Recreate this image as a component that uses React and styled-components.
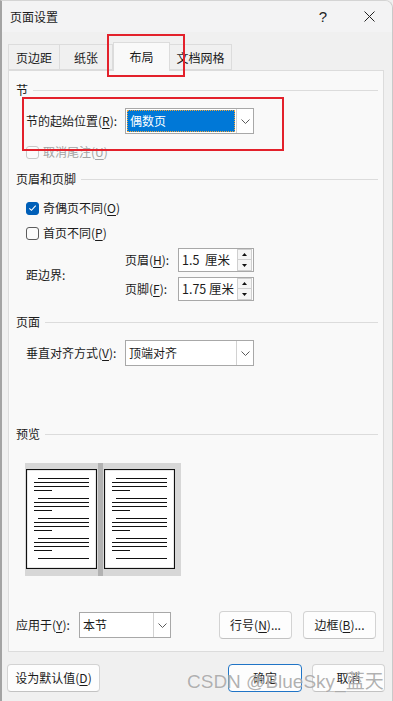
import React from "react";
import styled, { createGlobalStyle } from "styled-components";

const GlobalStyle = createGlobalStyle`
  html, body {
    margin: 0;
    padding: 0;
  }
  body {
    font-family: "Noto Sans CJK SC", "Noto Sans", sans-serif;
    font-size: 12px;
    color: #1b1b1b;
    background: #f0f0f0;
  }
  u {
    text-underline-offset: 2px;
    text-decoration-thickness: 1px;
  }
`;

const Window = styled.div`
  position: relative;
  width: 393px;
  height: 701px;
  box-sizing: border-box;
  background: #f0f0f0;
  border-left: 2px solid #a3a3a3;
  border-right: 1px solid #c9c9c9;
  border-top: 1px solid #d4d4d4;
  border-top-right-radius: 8px;
  overflow: hidden;
  display: flex;
  flex-direction: column;
`;

const TitleBar = styled.div`
  height: 31px;
  display: flex;
  align-items: center;
  justify-content: space-between;
  padding-left: 8px;
  background: #f3f3f4;
  line-height: 16px;
`;

const TitleButtons = styled.div`
  display: flex;
  height: 100%;
`;

const TitleButton = styled.div`
  width: 46px;
  display: flex;
  align-items: center;
  justify-content: center;
  font-family: "Liberation Sans", sans-serif;
  font-size: 15px;
  color: #222;
`;

const TabBar = styled.div`
  display: flex;
  align-items: flex-end;
  margin-top: 10px;
  padding-left: 6px;
  height: 28px;
  position: relative;
  z-index: 1;
`;

const Tab = styled.div`
  box-sizing: border-box;
  width: ${({ $w }) => $w}px;
  height: ${({ $active }) => ($active ? 29 : 26)}px;
  margin-bottom: ${({ $active }) => ($active ? -1 : 0)}px;
  display: flex;
  align-items: center;
  justify-content: center;
  padding-top: ${({ $active }) => ($active ? 0 : 1)}px;
  background: ${({ $active }) => ($active ? "#f9f9f9" : "#f0f0f0")};
  border: 1px solid #dcdcdc;
  border-bottom: ${({ $active }) => ($active ? "none" : "1px solid #dcdcdc")};
  border-left: ${({ $first, $active }) => ($first || $active ? "1px solid #dcdcdc" : "none")};
  line-height: 16px;
  white-space: nowrap;
`;

const Panel = styled.div`
  box-sizing: border-box;
  margin: 0 8px 0 6px;
  height: 582px;
  background: #f9f9f9;
  border: 1px solid #dcdcdc;
  padding: 11px 5px 0 7px;
  display: flex;
  flex-direction: column;
`;

const SectionHeader = styled.div`
  display: flex;
  align-items: center;
  gap: 5px;
  height: 16px;
  line-height: 16px;
  margin-top: ${({ $mt }) => $mt || 0}px;
  &::after {
    content: "";
    flex: 1;
    height: 1px;
    background: #dcdcdc;
  }
`;

const Row = styled.div`
  display: flex;
  align-items: center;
  margin-top: ${({ $mt }) => $mt || 0}px;
  padding-left: ${({ $indent }) => ($indent ? 10 : 0)}px;
  line-height: 16px;
  white-space: nowrap;
`;

const Label = styled.span`
  width: ${({ $w }) => $w}px;
  flex: none;
  color: ${({ $disabled }) => ($disabled ? "#a3a3a3" : "#1b1b1b")};
`;

const SelectBox = styled.div`
  box-sizing: border-box;
  width: ${({ $w }) => $w}px;
  height: 26px;
  display: flex;
  background: #fff;
  border: 1px solid #a8a8a8;
`;

const SelectValue = styled.div`
  flex: 1;
  display: flex;
  align-items: center;
  padding-left: 3px;
  margin: ${({ $selected }) => ($selected ? "1px" : "0")};
  background: ${({ $selected }) => ($selected ? "#0078d7" : "transparent")};
  color: ${({ $selected }) => ($selected ? "#fff" : "#1b1b1b")};
  outline: ${({ $selected }) => ($selected ? "1px dotted #f0a63c" : "none")};
  outline-offset: -1px;
`;

const SelectArrow = styled.div`
  width: 16px;
  flex: none;
  display: flex;
  align-items: center;
  justify-content: center;
  border-left: 1px solid #d2d2d2;
  background: #fff;
`;

const CheckBox = styled.div`
  box-sizing: border-box;
  width: 13px;
  height: 13px;
  flex: none;
  border-radius: 3px;
  margin-right: 4px;
  display: flex;
  align-items: center;
  justify-content: center;
  background: ${({ $checked }) => ($checked ? "#005fb8" : "#fbfbfb")};
  border: 1px solid
    ${({ $checked, $disabled }) =>
      $checked ? "#005fb8" : $disabled ? "#c9c9c9" : "#5c5c5c"};
`;

const MarginBlock = styled.div`
  display: flex;
  align-items: center;
  margin-top: 7px;
  padding-left: 10px;
`;

const MarginFields = styled.div`
  display: flex;
  flex-direction: column;
  gap: 5px;
`;

const SpinBox = styled.div`
  box-sizing: border-box;
  width: 76px;
  height: 24px;
  display: flex;
  align-items: center;
  background: #fff;
  border: 1px solid #a8a8a8;
  padding: 0 1px 0 3px;
`;

const SpinText = styled.span`
  flex: 1;
  font-size: 12.5px;
  white-space: pre;
`;

const SpinButtons = styled.div`
  display: flex;
  flex-direction: column;
  width: 15px;
`;

const SpinButton = styled.div`
  box-sizing: border-box;
  height: 11px;
  display: flex;
  align-items: center;
  justify-content: center;
  background: #f5f5f5;
  border: 1px solid #cfcfcf;
  & + & {
    border-top: none;
  }
`;

const PreviewArea = styled.div`
  display: flex;
  margin: 21px 0 0 9px;
  padding: 0 6px 0 1px;
  width: 149px;
  height: 113px;
  background: #d7d7d7;
`;

const PageThumb = styled.svg`
  margin: 6px 0 7px;
  display: block;
`;

const Gutter = styled.div`
  width: 5px;
  margin: 0 1px;
  background: #b2b2b2;
`;

const BottomRow = styled.div`
  display: flex;
  align-items: center;
  margin-top: 35px;
  padding-right: 2px;
  line-height: 16px;
`;

const Spacer = styled.div`
  flex: 1;
`;

const Button = styled.div`
  box-sizing: border-box;
  width: ${({ $w }) => $w}px;
  height: 28px;
  display: flex;
  align-items: center;
  justify-content: center;
  background: #fdfdfd;
  border: 1px solid ${({ $primary }) => ($primary ? "#1f74c6" : "#d3d3d3")};
  border-bottom-color: ${({ $primary }) => ($primary ? "#1f74c6" : "#c2c2c2")};
  border-radius: 4px;
  margin-left: ${({ $ml }) => $ml || 0}px;
  line-height: 16px;
  white-space: nowrap;
`;

const Footer = styled.div`
  display: flex;
  align-items: center;
  margin-top: 12px;
  padding: 0 7px 0 5px;
`;

const Annotation = styled.div`
  position: absolute;
  left: ${({ $x }) => $x}px;
  top: ${({ $y }) => $y}px;
  width: ${({ $w }) => $w}px;
  height: ${({ $h }) => $h}px;
  box-sizing: border-box;
  border: 2px solid #e3212b;
  pointer-events: none;
  z-index: 5;
`;

const Watermark = styled.div`
  position: absolute;
  left: 185px;
  top: 669px;
  font-family: "Liberation Sans", "Noto Sans CJK SC", sans-serif;
  font-size: 19px;
  line-height: 24px;
  color: rgba(110, 110, 110, 0.55);
  text-shadow: 0 0 1px rgba(255, 255, 255, 0.9);
  white-space: nowrap;
  z-index: 6;
`;

const Chevron = () => (
  <svg width="9" height="5" viewBox="0 0 9 5">
    <path d="M0.5 0.5 L4.5 4.5 L8.5 0.5" fill="none" stroke="#5a5a5a" strokeWidth="1" />
  </svg>
);

const Tick = () => (
  <svg width="9" height="8" viewBox="0 0 9 8">
    <path d="M1.3 4.3 L3.5 6.3 L7.7 1.6" fill="none" stroke="#fff" strokeWidth="1.1" />
  </svg>
);

const Triangle = ({ up }) => (
  <svg width="5" height="3" viewBox="0 0 5 3">
    <path d={up ? "M0 3 L2.5 0 L5 3 Z" : "M0 0 L2.5 3 L5 0 Z"} fill="#111" />
  </svg>
);

const Select = ({ width, value, selected }) => (
  <SelectBox $w={width}>
    <SelectValue $selected={selected}>{value}</SelectValue>
    <SelectArrow>
      <Chevron />
    </SelectArrow>
  </SelectBox>
);

const Spin = ({ value }) => (
  <SpinBox>
    <SpinText>{value}</SpinText>
    <SpinButtons>
      <SpinButton>
        <Triangle up />
      </SpinButton>
      <SpinButton>
        <Triangle />
      </SpinButton>
    </SpinButtons>
  </SpinBox>
);

const Page = () => {
  const lines = [];
  for (let g = 0; g < 4; g++) {
    const y = 9.5 + g * 20;
    lines.push(<line key={`a${g}`} x1="12" x2="63" y1={y} y2={y} />);
    lines.push(<line key={`b${g}`} x1="8" x2="63" y1={y + 4} y2={y + 4} />);
    lines.push(<line key={`c${g}`} x1="8" x2="63" y1={y + 8} y2={y + 8} />);
    lines.push(<line key={`d${g}`} x1="8" x2="26" y1={y + 12} y2={y + 12} />);
  }
  lines.push(<line key="last" x1="12" x2="63" y1="89.5" y2="89.5" />);
  return (
    <PageThumb width="71" height="100" viewBox="0 0 71 100">
      <rect x="0.5" y="0.5" width="70" height="99" fill="#fff" stroke="#111" strokeWidth="1.2" />
      <g stroke="#111" strokeWidth="1">{lines}</g>
    </PageThumb>
  );
};

const App = () => {
  return (
    <>
      <GlobalStyle />
      <Window>
        <TitleBar>
          <span>页面设置</span>
          <TitleButtons>
            <TitleButton>?</TitleButton>
            <TitleButton>
              <svg width="11" height="11" viewBox="0 0 11 11">
                <path d="M0.5 0.5 L10.5 10.5 M10.5 0.5 L0.5 10.5" stroke="#222" strokeWidth="1" />
              </svg>
            </TitleButton>
          </TitleButtons>
        </TitleBar>

        <TabBar>
          <Tab $w={52} $first>页边距</Tab>
          <Tab $w={53}>纸张</Tab>
          <Tab $w={57} $active>布局</Tab>
          <Tab $w={62}>文档网格</Tab>
        </TabBar>

        <Panel>
          <SectionHeader>节</SectionHeader>
          <Row $indent $mt={10}>
            <Label $w={99}>
              节的起始位置(<u>R</u>):
            </Label>
            <Select width={129} value="偶数页" selected />
          </Row>
          <Row $indent $mt={10}>
            <CheckBox $disabled />
            <Label $disabled>
              取消尾注(<u>U</u>)
            </Label>
          </Row>

          <SectionHeader $mt={11}>页眉和页脚</SectionHeader>
          <Row $indent $mt={13}>
            <CheckBox $checked>
              <Tick />
            </CheckBox>
            <Label>
              奇偶页不同(<u>O</u>)
            </Label>
          </Row>
          <Row $indent $mt={9}>
            <CheckBox />
            <Label>
              首页不同(<u>P</u>)
            </Label>
          </Row>
          <MarginBlock>
            <Label $w={99}>距边界:</Label>
            <MarginFields>
              <Row>
                <Label $w={53}>
                  页眉(<u>H</u>):
                </Label>
                <Spin value="1.5  厘米" />
              </Row>
              <Row>
                <Label $w={53}>
                  页脚(<u>F</u>):
                </Label>
                <Spin value="1.75 厘米" />
              </Row>
            </MarginFields>
          </MarginBlock>

          <SectionHeader $mt={13}>页面</SectionHeader>
          <Row $indent $mt={10}>
            <Label $w={99}>
              垂直对齐方式(<u>V</u>):
            </Label>
            <Select width={129} value="顶端对齐" />
          </Row>

          <SectionHeader $mt={60}>预览</SectionHeader>
          <PreviewArea>
            <Page />
            <Gutter />
            <Page />
          </PreviewArea>

          <BottomRow>
            <Label $w={63}>
              应用于(<u>Y</u>):
            </Label>
            <Select width={92} value="本节" />
            <Spacer />
            <Button $w={73}>
              行号(<u>N</u>)...
            </Button>
            <Button $w={73} $ml={11}>
              边框(<u>B</u>)...
            </Button>
          </BottomRow>
        </Panel>

        <Footer>
          <Button $w={93}>
            设为默认值(<u>D</u>)
          </Button>
          <Spacer />
          <Button $w={74} $primary>
            确定
          </Button>
          <Button $w={73} $ml={10}>
            取消
          </Button>
        </Footer>

        <Annotation $x={105} $y={33} $w={78} $h={43} />
        <Annotation $x={20} $y={96} $w={262} $h={54} />
        <Watermark>CSDN @BlueSky_蓝天</Watermark>
      </Window>
    </>
  );
};

export default App;
